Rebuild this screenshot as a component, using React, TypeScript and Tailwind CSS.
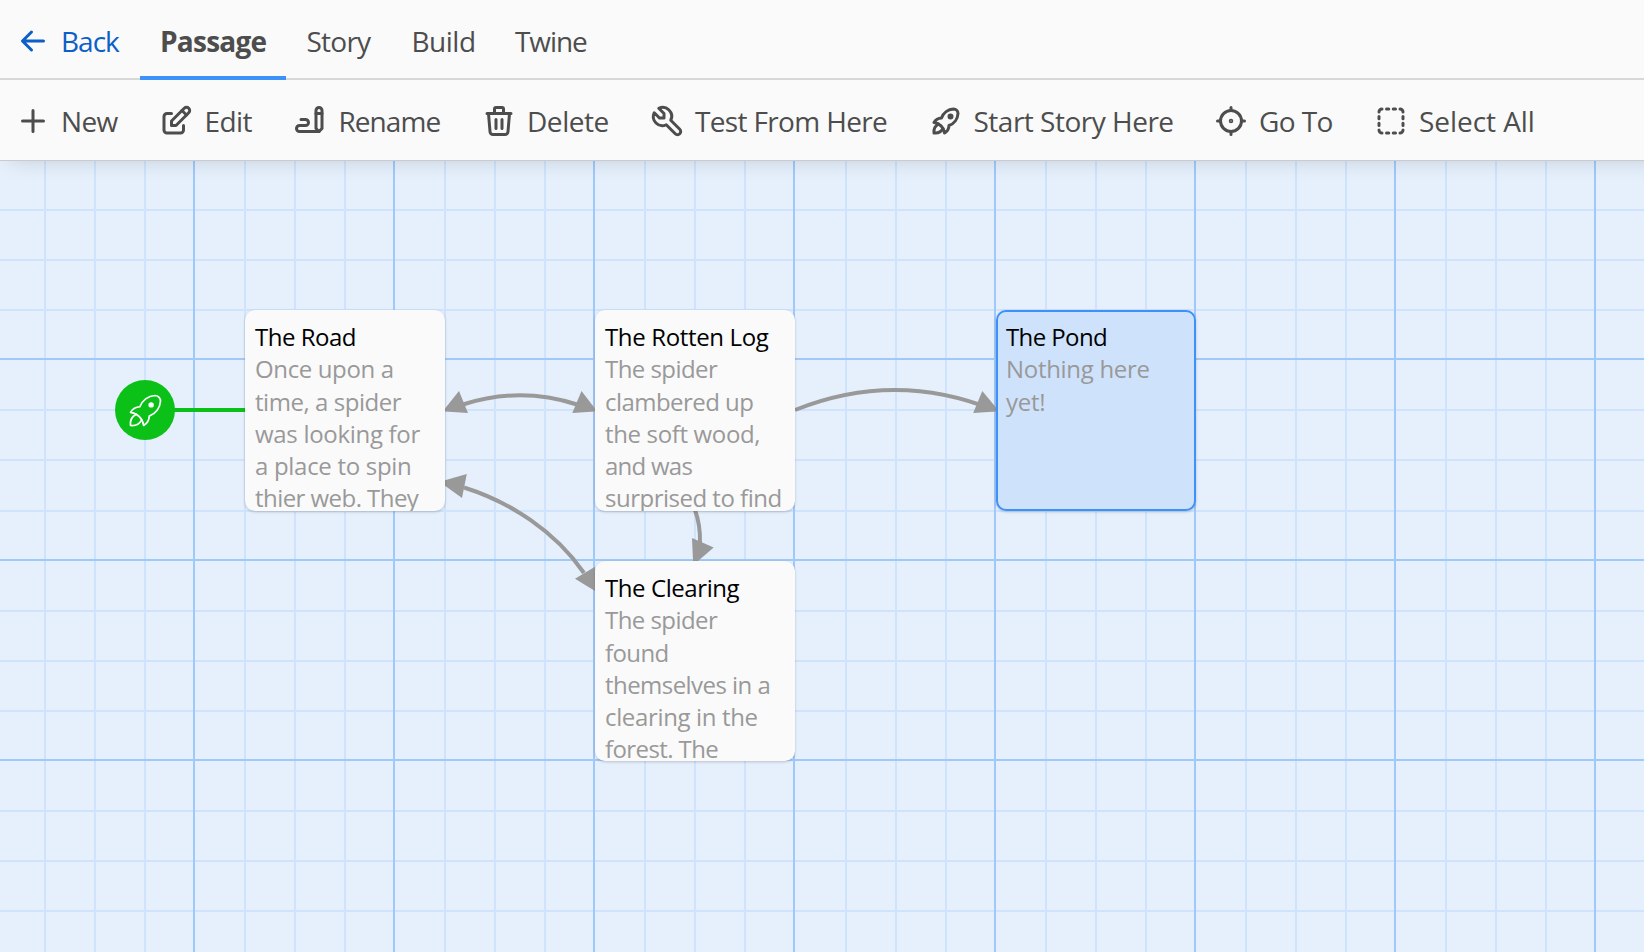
import type { ReactNode } from "react";

type IconProps = { children: ReactNode; className?: string };

function Icon({ children, className = "size-9 stroke-2" }: IconProps) {
  return (
    <svg
      viewBox="0 0 24 24"
      fill="none"
      stroke="currentColor"
      strokeLinecap="round"
      strokeLinejoin="round"
      className={`shrink-0 ${className}`}
    >
      {children}
    </svg>
  );
}

const rocketShape = (
  <>
    <path d="M4 13a8 8 0 0 1 7 7a6 6 0 0 0 3 -5a9 9 0 0 0 6 -8a3 3 0 0 0 -3 -3a9 9 0 0 0 -8 6a6 6 0 0 0 -5 3" />
    <path d="M7 14a6 6 0 0 0 -3 6a6 6 0 0 0 6 -3" />
    <circle cx="15" cy="9" r="1" fill="currentColor" />
  </>
);

const tabs = [
  { label: "Passage", active: true, width: "w-[146px]", text: "font-bold tracking-[-0.75px] pl-[20px]" },
  { label: "Story", active: false, width: "w-[105px]", text: "tracking-[-0.75px] pl-[20.5px]" },
  { label: "Build", active: false, width: "w-[104px]", text: "tracking-[-0.5px] pl-[20.5px]" },
  { label: "Twine", active: false, width: "w-[111px]", text: "tracking-[-1.1px] pl-[20px]" },
];

const actions = [
  {
    label: "New",
    width: "w-[142.5px]",
    text: "tracking-[-0.7px] pl-[10px]",
    icon: <path d="M12 5v14M5 12h14" />,
  },
  {
    label: "Edit",
    width: "w-[134px]",
    text: "tracking-[-0.6px] pl-[11px]",
    icon: (
      <>
        <path d="M9 7h-3a2 2 0 0 0 -2 2v9a2 2 0 0 0 2 2h9a2 2 0 0 0 2 -2v-3" />
        <path d="M9 15h3l8.5 -8.5a1.5 1.5 0 0 0 -3 -3l-8.5 8.5v3" />
        <path d="M16 5l3 3" />
      </>
    ),
  },
  {
    label: "Rename",
    width: "w-[189.5px]",
    text: "tracking-[-0.95px] pl-[11px]",
    icon: (
      <>
        <path d="M20 17v-12c0 -1.121 -.879 -2 -2 -2s-2 .879 -2 2v12l2 2l2 -2z" />
        <path d="M16 7h4" />
        <path d="M18 19h-13a2 2 0 1 1 0 -4h4a2 2 0 1 0 0 -4h-3" />
      </>
    ),
  },
  {
    label: "Delete",
    width: "w-[167.5px]",
    text: "tracking-[-0.45px] pl-[10px]",
    icon: (
      <>
        <path d="M4 7h16M10 11v6M14 11v6" />
        <path d="M5 7l1 12a2 2 0 0 0 2 2h8a2 2 0 0 0 2 -2l1 -12" />
        <path d="M9 7v-3a1 1 0 0 1 1 -1h4a1 1 0 0 1 1 1v3" />
      </>
    ),
  },
  {
    label: "Test From Here",
    width: "w-[279.5px]",
    text: "tracking-[-0.65px] pl-[10.5px]",
    icon: <path d="M7 10h3v-3l-3.5 -3.5a6 6 0 0 1 8 8l6 6a2 2 0 0 1 -3 3l-6 -6a6 6 0 0 1 -8 -8l3.5 3.5" />,
  },
  {
    label: "Start Story Here",
    width: "w-[285px]",
    text: "tracking-[-0.5px] pl-[9.5px]",
    icon: rocketShape,
  },
  {
    label: "Go To",
    width: "w-[160px]",
    text: "tracking-[-0.6px] pl-[10px]",
    icon: (
      <>
        <circle cx="12" cy="12" r=".5" fill="currentColor" />
        <circle cx="12" cy="12" r="7" />
        <path d="M12 3v2M3 12h2M12 19v2M19 12h2" />
      </>
    ),
  },
  {
    label: "Select All",
    width: "w-[180px]",
    text: "tracking-[-0.05px] pl-[10px]",
    icon: (
      <path d="M4 6a2 2 0 0 1 2 -2m3 0h1.5m3 0h1.5m3 0a2 2 0 0 1 2 2m0 3v1.5m0 3v1.5m0 3a2 2 0 0 1 -2 2m-3 0h-1.5m-3 0h-1.5m-3 0a2 2 0 0 1 -2 -2m0 -3v-1.5m0 -3v-1.5m0 -3" />
    ),
  },
];

type Line = [text: string, tracking: string];
type Passage = { title: Line; lines: Line[]; place: string; selected?: boolean };

// Passage positions are relative to the story canvas, which starts below the toolbar.
const passages: Passage[] = [
  {
    title: ["The Road", "tracking-[-0.5px]"],
    place: "left-[245px] top-[150px] h-[201px]",
    lines: [
      ["Once upon a", "tracking-[-0.37px]"],
      ["time, a spider", "tracking-[-0.45px]"],
      ["was looking for", "tracking-[-0.3px]"],
      ["a place to spin", "tracking-[-0.3px]"],
      ["thier web. They", "tracking-[-0.55px]"],
    ],
  },
  {
    title: ["The Rotten Log", "tracking-[-0.35px]"],
    place: "left-[595px] top-[150px] h-[201px]",
    lines: [
      ["The spider", "tracking-[-0.55px]"],
      ["clambered up", "tracking-[-0.55px]"],
      ["the soft wood,", "tracking-[-0.35px]"],
      ["and was", "tracking-[-0.75px]"],
      ["surprised to find", "tracking-[-0.5px]"],
    ],
  },
  {
    title: ["The Clearing", "tracking-[-0.42px]"],
    place: "left-[595px] top-[401px] h-[200px]",
    lines: [
      ["The spider", "tracking-[-0.55px]"],
      ["found", "tracking-[-0.6px]"],
      ["themselves in a", "tracking-[-0.55px]"],
      ["clearing in the", "tracking-[-0.35px]"],
      ["forest. The", "tracking-[-0.6px]"],
    ],
  },
  {
    title: ["The Pond", "tracking-[-0.6px]"],
    place: "left-[996px] top-[150px] h-[201px]",
    selected: true,
    lines: [
      ["Nothing here", "tracking-[-0.3px]"],
      ["yet!", "tracking-[-0.25px]"],
    ],
  },
];

function PassageCard({ title, lines, place, selected }: Passage) {
  return (
    <article
      className={`absolute w-[200px] overflow-hidden rounded-[10px] pt-[11.4px] pl-2.5 text-2xl/[32.1px] whitespace-nowrap shadow-[0_1px_3px_rgba(0,0,0,0.2)] ${place} ${
        selected ? "bg-[#cfe2fc] inset-ring-2 inset-ring-[#3c92f8]" : "bg-[#fafafa]"
      }`}
    >
      <h2 className={`text-black ${title[1]}`}>{title[0]}</h2>
      <div className="text-[#999999]">
        {lines.map(([text, tracking]) => (
          <div key={text} className={tracking}>
            {text}
          </div>
        ))}
      </div>
    </article>
  );
}

const minorX = [44, 94, 144, 244, 294, 344, 444, 494, 544, 644, 694, 744, 845, 895, 945, 1045, 1095, 1145, 1245, 1295, 1345, 1445, 1495, 1545];
const majorX = [193, 393, 593, 793, 994, 1194, 1394, 1594];
const minorY = [49, 99, 149, 249, 299, 350, 450, 500, 550, 650, 700, 750];
const majorY = [198, 399, 599];

function Grid() {
  return (
    <svg className="absolute inset-0 size-full" shapeRendering="crispEdges">
      <g className="fill-[#cfe3fd]">
        {minorX.map((x) => (
          <rect key={x} x={x} y="0" width="2" height="100%" />
        ))}
        {minorY.map((y) => (
          <rect key={y} x="0" y={y} width="100%" height="2" />
        ))}
      </g>
      <g className="fill-[#9fc9fb]">
        {majorX.map((x) => (
          <rect key={x} x={x} y="0" width="2" height="100%" />
        ))}
        {majorY.map((y) => (
          <rect key={y} x="0" y={y} width="100%" height="2" />
        ))}
      </g>
    </svg>
  );
}

function Links() {
  return (
    <svg className="absolute inset-0 size-full" viewBox="0 160 1644 792">
      <g className="fill-none stroke-[#999999] stroke-4">
        <path d="M463 404.5Q520 386 577 404.5" />
        <path d="M464 487.5C510 502 555 531 584 573" />
        <path d="M695 510Q700.5 525 700 543" />
        <path d="M795 410Q895 370 994 410" />
      </g>
      <g className="fill-[#999999]">
        <path d="M445 408.5L459 391L468 413L445 411.5z" />
        <path d="M595 408.5L581.5 391L572.3 413L595 411.5z" />
        <path d="M445 480.3L466.8 474L462 498L445 485.7z" />
        <path d="M575 578.7L595 566.7V591z" />
        <path d="M692 538L713.7 547.5L698 561H693z" />
        <path d="M996 407.5L982.3 391L973.2 413L996 411.5z" />
      </g>
      <path d="M170 410H246" className="stroke-[#0bc117] stroke-4" />
    </svg>
  );
}

export default function App() {
  return (
    <div
      className="flex h-screen flex-col overflow-hidden bg-[#fafafa] text-[28px]/[36px] whitespace-nowrap text-[#4d4d4d]"
      style={{ fontFamily: '"Open Sans", "Noto Sans", sans-serif' }}
    >
      <header className="z-10 -mr-8 shrink-0 bg-[#fafafa] shadow-[0_1px_0_#c9cbce,0_10px_20px_-10px_rgba(0,0,0,0.16)]">
        <nav className="flex h-20 border-b-2 border-[#d8d8d8]">
          <button className="flex w-[140px] items-center pt-1 pl-[15px] text-[#0b5fc7]">
            <Icon>
              <path d="M5 12h14M5 12l6 6M5 12l6 -6" />
            </Icon>
            <span className="pl-[10px] tracking-[-1px]">Back</span>
          </button>
          {tabs.map((tab) => (
            <button
              key={tab.label}
              className={`-mb-0.5 flex items-center border-b-4 pt-1.5 ${tab.width} ${tab.text} ${
                tab.active ? "border-[#3c92f8]" : "border-transparent"
              }`}
            >
              {tab.label}
            </button>
          ))}
        </nav>
        <div className="flex h-20 items-center pt-0.5 pl-[15px]">
          {actions.map((action) => (
            <button key={action.label} className={`flex items-center ${action.width}`}>
              <Icon>{action.icon}</Icon>
              <span className={action.text}>{action.label}</span>
            </button>
          ))}
        </div>
      </header>
      <main className="relative min-h-0 flex-1 overflow-hidden bg-[#e6f0fd]">
        <Grid />
        <Links />
        <div className="absolute top-[220px] left-[115px] flex size-15 items-center justify-center rounded-full bg-[#0bc117] text-white">
          <Icon className="size-[45px] stroke-[0.9]">{rocketShape}</Icon>
        </div>
        {passages.map((passage) => (
          <PassageCard key={passage.title[0]} {...passage} />
        ))}
      </main>
    </div>
  );
}
